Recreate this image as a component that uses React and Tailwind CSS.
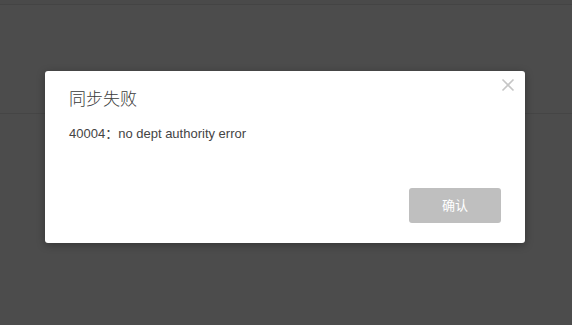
export default function App() {
  const font = { fontFamily: '"Liberation Sans", "Noto Sans CJK SC", sans-serif' };
  return (
    <div className="relative w-[572px] h-[325px] overflow-hidden bg-[#4c4c4c]" style={font}>
      <div className="h-[5px] border-b border-[#444444] bg-[#4a4a4a]" />
      <div className="h-[109px] border-b border-[#454545]" />
      <div className="absolute left-[45px] top-[71px] w-[480px] h-[172px] bg-white rounded-[3px] shadow-[0_2px_8px_rgba(0,0,0,0.3)] flex flex-col px-[24px] pt-[17px]">
        <button className="absolute right-[9px] top-[6px] w-[16px] h-[16px] flex items-center justify-center">
          <svg width="14" height="14" viewBox="0 0 14 14" fill="none" stroke="#c6c6c6" strokeWidth="1.6">
            <path d="M1.5 1.5 L12.5 12.5 M12.5 1.5 L1.5 12.5" />
          </svg>
        </button>
        <div className="text-[17px] leading-[24px] text-[#3a3a3a] font-light">同步失败</div>
        <div className="mt-[13px] text-[13px] leading-[18px] text-[#444444]">40004：no dept authority error</div>
        <div className="flex justify-end mt-auto mb-[20px]">
          <button className="w-[92px] h-[35px] rounded-[3px] bg-[#bfbfbf] text-white text-[13px]">确认</button>
        </div>
      </div>
    </div>
  );
}
